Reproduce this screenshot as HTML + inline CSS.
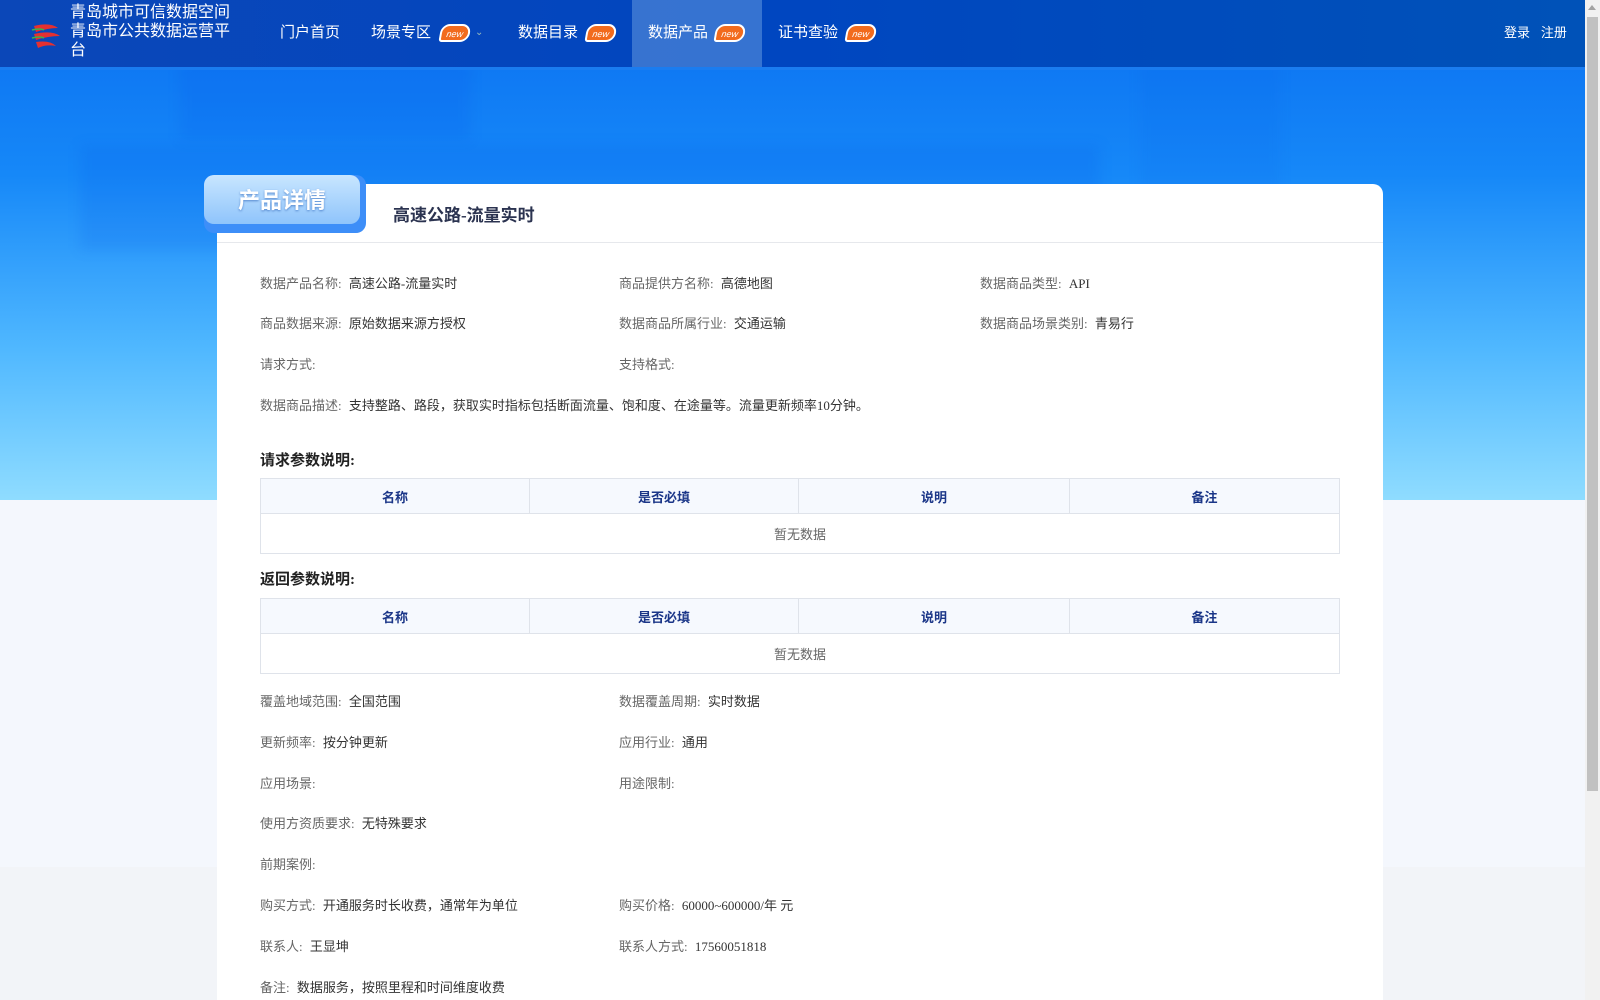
<!DOCTYPE html>
<html><head><meta charset="utf-8">
<style>
*{margin:0;padding:0;box-sizing:border-box}
body{width:1600px;height:1000px;overflow:hidden;position:relative;background:#f4f7fd;font-family:"Liberation Serif","Noto Sans CJK SC",serif;font-size:13px;color:#333}
.hero{position:absolute;left:0;top:0;width:1585px;height:500px;background:linear-gradient(180deg,#0a6ff0 0%,#1688f8 35%,#50b8ff 70%,#8fdcff 100%);overflow:hidden}
.sh{position:absolute;background:rgba(0,70,230,0.12);filter:blur(6px)}
.bot{position:absolute;left:0;top:867px;width:1585px;height:133px;background:#f2f4f8}
.hdr{position:absolute;left:0;top:0;width:1585px;height:70px;background:linear-gradient(90deg,#0b47b8,#0046c0 50%,#0052b8);border-bottom:3px solid #1a7cf0;color:#fff;font-family:"Liberation Sans","Noto Sans CJK SC",sans-serif}
.logo{position:absolute;left:70px;top:3px;font-size:16px;line-height:19px;width:175px}
.nav{position:absolute;top:0;height:66px;line-height:66px;font-size:15px}
.act{position:absolute;left:632px;top:0;width:130px;height:67px;background:rgba(120,170,230,0.45)}
.new{position:absolute;top:24px;width:30px;height:18px;background:#f26b1d;border-radius:9px 9px 9px 3px;color:#fff;font-size:9px;line-height:16px;text-align:center;font-style:italic;border:2px solid #fff;transform:skewX(-10deg)}
.card{position:absolute;left:217px;top:184px;width:1166px;height:816px;background:#fff;border-radius:10px 10px 0 0}
.tab{position:absolute;left:204px;top:175px;width:162px;height:58px;border-radius:10px;background:#3d8ef8}
.tab2{position:absolute;left:204px;top:175px;width:156px;height:49px;border-radius:10px;background:linear-gradient(180deg,#c8e6ff,#8fc4fb);color:#fff;font-family:"Liberation Sans","Noto Sans CJK SC",sans-serif;font-size:22px;font-weight:bold;text-align:center;line-height:52px;text-shadow:0 1px 2px rgba(0,60,160,.5)}
.ttl{position:absolute;left:393px;top:201px;font-size:17px;font-weight:bold;color:#2b3350}
.div{position:absolute;left:217px;top:242px;width:1166px;height:1px;background:#e6e8ec}
.f{position:absolute;white-space:nowrap}
.f b{font-weight:normal;color:#666;margin-right:4px}
.h{position:absolute;left:260px;font-size:15px;font-weight:bold;color:#222}
table{position:absolute;left:260px;width:1080px;border-collapse:collapse;font-size:13px}
td,th{border:1px solid #dfe3ea;text-align:center}
th{background:#f6f9fe;color:#1b3688;height:35px;font-weight:bold}
td{height:40px;color:#666}
.sb{position:absolute;left:1585px;top:0;width:15px;height:1000px;background:#f1f1f1}
.sbt{position:absolute;left:1587px;top:17px;width:11px;height:774px;background:#c1c1c1}
</style></head><body>
<div class="hero">
<div class="sh" style="left:180px;top:60px;width:290px;height:80px"></div>
<div class="sh" style="left:80px;top:145px;width:1020px;height:105px"></div>
<div class="sh" style="left:1140px;top:60px;width:140px;height:440px;background:rgba(0,80,230,0.08)"></div>
</div>
<div class="bot"></div>
<div class="hdr">
<svg style="position:absolute;left:30px;top:20px" width="34" height="32" viewBox="0 0 34 32"><path d="M4 6 Q20 2 28 8 Q18 8 6 12Z" fill="#e53030"/><path d="M4 14 Q22 10 30 16 Q18 16 6 20Z" fill="#e53030"/><path d="M6 22 Q20 20 26 26 Q16 24 8 28Z" fill="#e53030"/><path d="M2 10 Q10 8 14 10" stroke="#3cb34a" stroke-width="1.5" fill="none"/><path d="M2 18 Q10 16 14 18" stroke="#3cb34a" stroke-width="1.5" fill="none"/></svg>
<div class="logo">青岛城市可信数据空间<br>青岛市公共数据运营平台</div>
<div class="act"></div>
<div class="nav" style="left:280px">门户首页</div>
<div class="nav" style="left:371px">场景专区</div><div class="new" style="left:440px">new</div>
<div class="nav" style="left:475px;font-size:10px;color:#9bb">⌄</div>
<div class="nav" style="left:518px">数据目录</div><div class="new" style="left:586px">new</div>
<div class="nav" style="left:648px">数据产品</div><div class="new" style="left:715px">new</div>
<div class="nav" style="left:778px">证书查验</div><div class="new" style="left:846px">new</div>
<div class="nav" style="left:1504px;font-size:13px">登录&nbsp;&nbsp;&nbsp;注册</div>
</div>
<div class="card"></div>
<div class="tab"></div><div class="tab2">产品详情</div>
<div class="ttl">高速公路-流量实时</div>
<div class="div"></div>

<div class="f" style="left:260px;top:273px"><b>数据产品名称:</b> 高速公路-流量实时</div>
<div class="f" style="left:619px;top:273px"><b>商品提供方名称:</b> 高德地图</div>
<div class="f" style="left:980px;top:273px"><b>数据商品类型:</b> API</div>
<div class="f" style="left:260px;top:313px"><b>商品数据来源:</b> 原始数据来源方授权</div>
<div class="f" style="left:619px;top:313px"><b>数据商品所属行业:</b> 交通运输</div>
<div class="f" style="left:980px;top:313px"><b>数据商品场景类别:</b> 青易行</div>
<div class="f" style="left:260px;top:354px"><b>请求方式:</b></div>
<div class="f" style="left:619px;top:354px"><b>支持格式:</b></div>
<div class="f" style="left:260px;top:395px"><b>数据商品描述:</b> 支持整路、路段，获取实时指标包括断面流量、饱和度、在途量等。流量更新频率10分钟。</div>

<div class="h" style="top:449px">请求参数说明:</div>
<table style="top:478px"><tr><th style="width:269px">名称</th><th style="width:269px">是否必填</th><th style="width:271px">说明</th><th>备注</th></tr><tr><td colspan="4">暂无数据</td></tr></table>
<div class="h" style="top:568px">返回参数说明:</div>
<table style="top:598px"><tr><th style="width:269px">名称</th><th style="width:269px">是否必填</th><th style="width:271px">说明</th><th>备注</th></tr><tr><td colspan="4">暂无数据</td></tr></table>

<div class="f" style="left:260px;top:691px"><b>覆盖地域范围:</b> 全国范围</div>
<div class="f" style="left:619px;top:691px"><b>数据覆盖周期:</b> 实时数据</div>
<div class="f" style="left:260px;top:732px"><b>更新频率:</b> 按分钟更新</div>
<div class="f" style="left:619px;top:732px"><b>应用行业:</b> 通用</div>
<div class="f" style="left:260px;top:773px"><b>应用场景:</b></div>
<div class="f" style="left:619px;top:773px"><b>用途限制:</b></div>
<div class="f" style="left:260px;top:813px"><b>使用方资质要求:</b> 无特殊要求</div>
<div class="f" style="left:260px;top:854px"><b>前期案例:</b></div>
<div class="f" style="left:260px;top:895px"><b>购买方式:</b> 开通服务时长收费，通常年为单位</div>
<div class="f" style="left:619px;top:895px"><b>购买价格:</b> 60000~600000/年 元</div>
<div class="f" style="left:260px;top:936px"><b>联系人:</b> 王显坤</div>
<div class="f" style="left:619px;top:936px"><b>联系人方式:</b> 17560051818</div>
<div class="f" style="left:260px;top:977px"><b>备注:</b> 数据服务，按照里程和时间维度收费</div>

<div class="sb"></div><div class="sbt"></div>
<div style="position:absolute;left:1588px;top:5px;width:0;height:0;border-left:4px solid transparent;border-right:4px solid transparent;border-bottom:5px solid #a3a3a3"></div>
</body></html>
